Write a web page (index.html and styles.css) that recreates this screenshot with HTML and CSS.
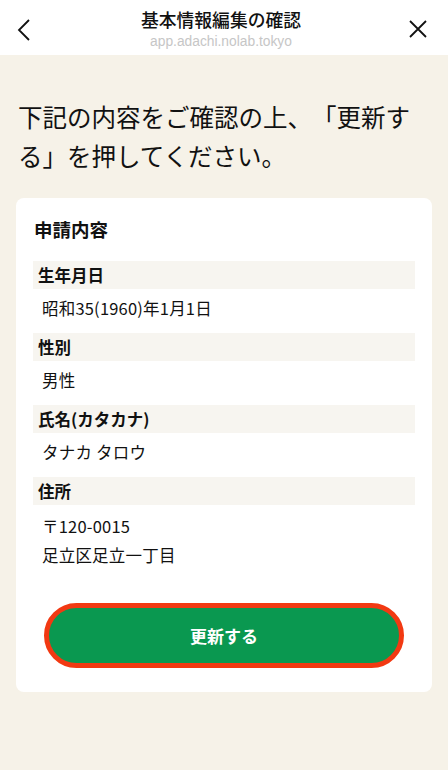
FILE: index.html
```html
<!DOCTYPE html>
<html lang="ja">
<head>
<meta charset="utf-8">
<title>基本情報編集の確認</title>
<link rel="stylesheet" href="styles.css">
</head>
<body>
<header class="topbar">
  <button class="icon-btn back" aria-label="戻る">
    <svg width="14" height="24" viewBox="0 0 14 24"><polyline points="12,2 2,12 12,22" fill="none" stroke="#111" stroke-width="1.8"/></svg>
  </button>
  <div class="titles">
    <div class="title">基本情報編集の確認</div>
    <div class="url">app.adachi.nolab.tokyo</div>
  </div>
  <button class="icon-btn close" aria-label="閉じる">
    <svg width="20" height="20" viewBox="0 0 20 20"><path d="M2 2L18 18M18 2L2 18" fill="none" stroke="#111" stroke-width="1.8"/></svg>
  </button>
</header>
<main class="page">
  <h1 class="lead">下記の内容をご確認の上、「更新する」を押してください。</h1>
  <section class="card">
    <h2 class="card-title">申請内容</h2>
    <dl class="fields">
      <dt class="label">生年月日</dt>
      <dd class="value">昭和35(1960)年1月1日</dd>
      <dt class="label">性別</dt>
      <dd class="value">男性</dd>
      <dt class="label">氏名(カタカナ)</dt>
      <dd class="value">タナカ タロウ</dd>
      <dt class="label">住所</dt>
      <dd class="value value-multi"><span>〒120-0015</span><span>足立区足立一丁目</span></dd>
    </dl>
    <button class="submit">更新する</button>
  </section>
</main>
</body>
</html>
```
FILE: styles.css
```css
* { box-sizing: border-box; }
html, body { margin: 0; padding: 0; }
body {
  width: 448px;
  min-height: 770px;
  background: #f6f2e8;
  font-family: "Noto Sans CJK JP", "Noto Sans", sans-serif;
  color: #111;
  text-spacing-trim: space-all;
}
.topbar {
  height: 55px;
  background: #fff;
  display: flex;
  align-items: center;
  justify-content: space-between;
  padding: 0 18px 0 12px;
}
.icon-btn {
  border: 0;
  background: none;
  padding: 0;
  display: flex;
  align-items: center;
  justify-content: center;
  width: 24px;
  height: 24px;
}
.back { margin-top: 4px; }
.close { margin-top: 3px; }
.titles {
  display: flex;
  flex-direction: column;
  align-items: center;
  padding-top: 4px;
}
.title {
  font-size: 17.8px;
  line-height: 22px;
  font-weight: 500;
  color: #111;
}
.url {
  font-family: "Liberation Sans", "Noto Sans", sans-serif;
  font-size: 13.8px;
  line-height: 18px;
  color: #c6c6c6;
  margin-top: 3px;
}
.page {
  padding: 42px 16px 40px;
}
.lead {
  margin: 0 2px 23px;
  font-size: 24.5px;
  line-height: 39px;
  font-weight: 400;
  color: #111;
}
.card {
  background: #fff;
  border-radius: 8px;
  padding: 19px 17px 24px;
}
.card-title {
  margin: 0 0 20px 1px;
  font-size: 18.5px;
  line-height: 24px;
  font-weight: 700;
}
.fields { margin: 0; }
.label {
  background: #f7f5f0;
  height: 28px;
  line-height: 28px;
  padding: 0 5px;
  font-size: 16.5px;
  font-weight: 700;
}
.value {
  margin: 0;
  padding: 8px 9px 14px;
  font-size: 16.5px;
  line-height: 22px;
  letter-spacing: 0.2px;
}
.value-multi {
  display: flex;
  flex-direction: column;
  gap: 7px;
  padding-top: 10px;
}
.submit {
  display: flex;
  align-items: center;
  justify-content: center;
  width: calc(100% - 22px);
  margin: 23px 11px 0;
  height: 65px;
  border: 5px solid #f23912;
  border-radius: 40px;
  background: #0a9850;
  color: #fff;
  font-family: "Noto Sans CJK JP", "Noto Sans", sans-serif;
  font-size: 17px;
  font-weight: 700;
}
```
